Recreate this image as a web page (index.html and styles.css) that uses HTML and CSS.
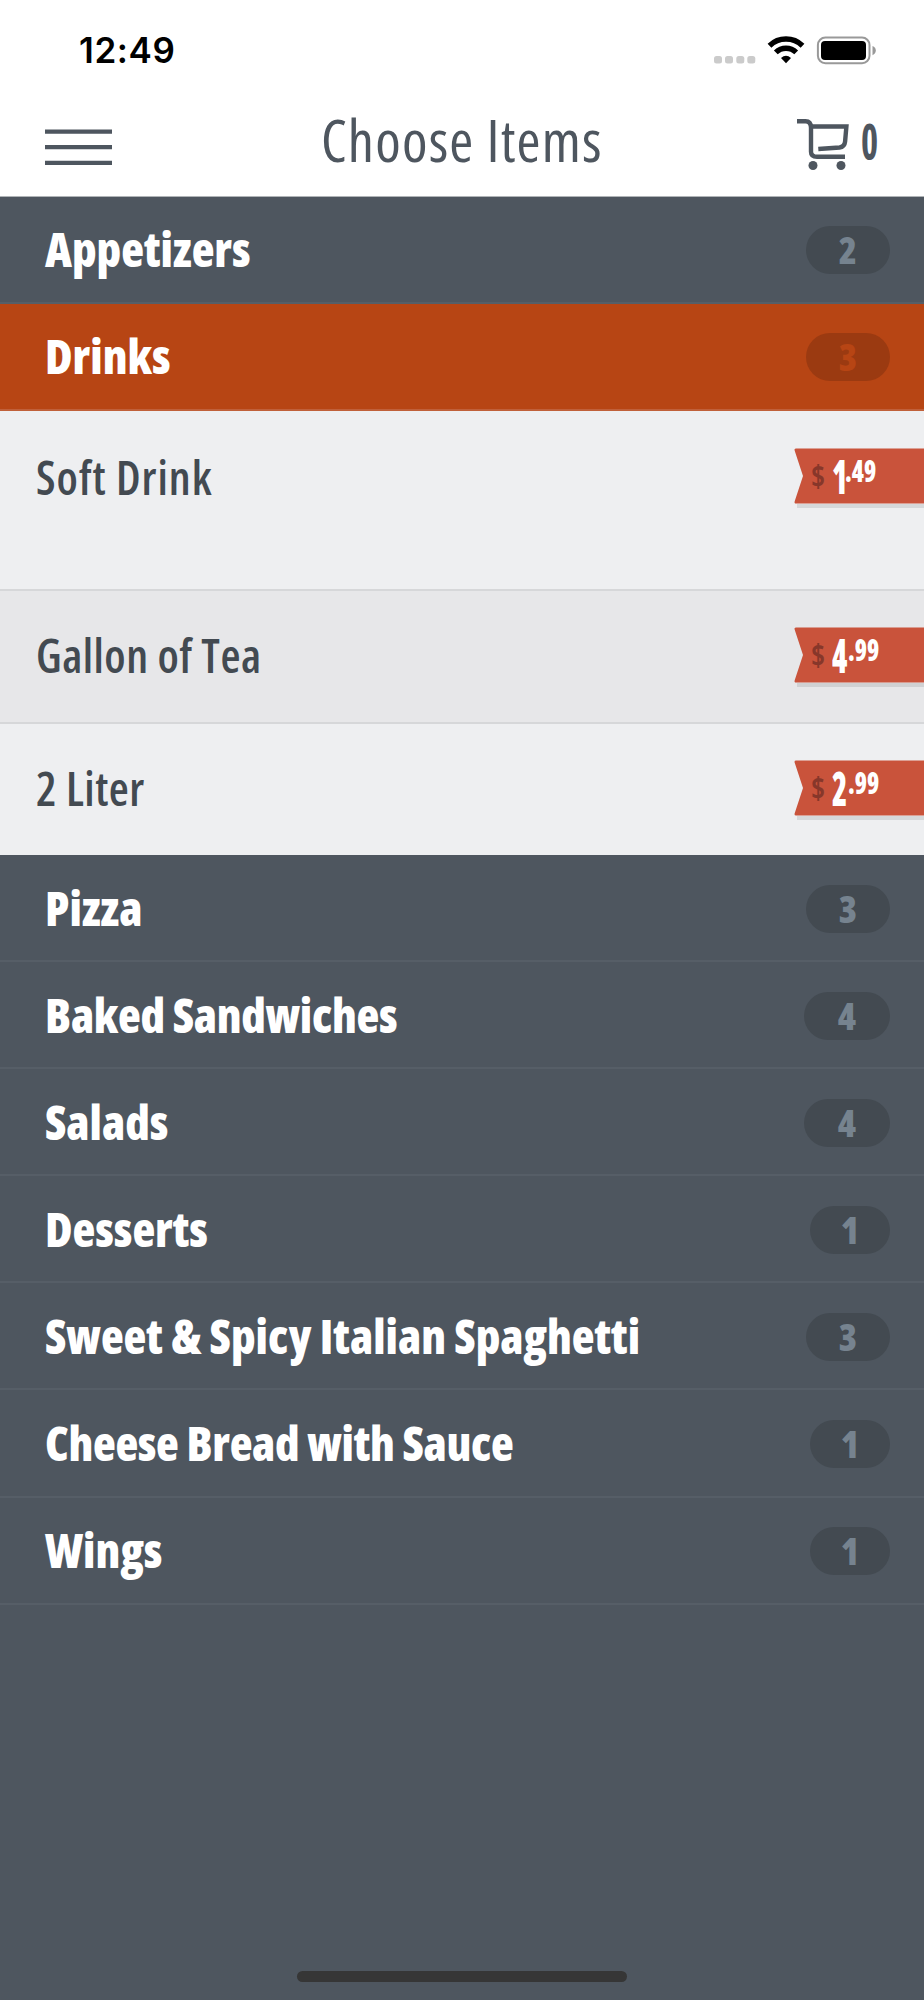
FILE: index.html
```
<!DOCTYPE html>
<html lang="en">
    <head>
        <title>Choose Items</title>
        <meta charset="UTF-8">
        <link rel="stylesheet" href="styles.css">
    </head>
    <body>
        <header>
            <div class="status">
                <span class="time">12:49</span>
                <svg class="signals" width="164" height="30" viewBox="0 0 164 30">
                    <g fill="#cbcbcb">
                        <rect x="0" y="21" width="8" height="7.5" rx="2.5"/>
                        <rect x="11" y="21" width="8" height="7.5" rx="2.5"/>
                        <rect x="22.3" y="21" width="8" height="7.5" rx="2.5"/>
                        <rect x="33.3" y="21" width="8" height="7.5" rx="2.5"/>
                    </g>
                    <g fill="none" stroke="#000" stroke-width="5.4">
                        <path d="M55.5 10.8a23.6 23.6 0 0 1 33 0"/>
                        <path d="M61.8 17.4a14.6 14.6 0 0 1 20.4 0"/>
                    </g>
                    <path d="M72 28.3l-5-5.2q5-4.6 10 0z"/>
                    <rect x="103.9" y="2.6" width="51.6" height="25.6" rx="7.5" fill="none" stroke="#999" stroke-width="2"/>
                    <rect x="107" y="5.9" width="45" height="19" rx="4"/>
                    <path d="M158.5 11q3.3 1.2 3.3 4.6t-3.3 4.6z" fill="#999"/>
                </svg>
            </div>
            <nav class="toolbar">
                <svg class="menu" width="67" height="36" viewBox="0 0 67 36">
                    <path d="M0 2.7h67M0 18.2h67M0 33.8h67" stroke="#4e565f" stroke-width="4.3"/>
                </svg>
                <h1>Choose Items</h1>
                <div class="cart">
                    <svg width="54" height="52" viewBox="0 0 54 52">
                        <g fill="none" stroke="#4e565f" stroke-width="4.4">
                            <path d="M0 2.3h8.5q5.5 0 5.5 6.5v24q0 5 6 5h28"/>
                            <path d="M14 7.5h35.4l-1.3 15q-.5 5.3-5.6 6L21.3 30"/>
                        </g>
                        <circle cx="16" cy="46.5" r="4.5" fill="#4e565f"/>
                        <circle cx="44" cy="46.5" r="4.5" fill="#4e565f"/>
                    </svg>
                    <span>0</span>
                </div>
            </nav>
        </header>
        <ul class="categories">
            <li class="category first"><span class="name">Appetizers</span><span class="count">2</span></li>
            <li class="category active"><span class="name">Drinks</span><span class="count">3</span></li>
            <li>
                <ul class="items">
                    <li class="item tall">
                        <span class="label">Soft Drink</span>
                        <div class="price">
                            <svg width="130" height="61" viewBox="0 0 130 61">
                                <path d="M3 56h127v4H3z" fill="#d6d8da"/>
                                <path d="M2 .5h128v55H2q-2 0-1.3-2.3L9 28 .7 2.8Q0 .5 2 .5z" fill="#c9533b"/>
                            </svg>
                            <span class="currency">$</span><span class="whole one">1</span><span class="cents">.49</span>
                        </div>
                    </li>
                    <li class="item even">
                        <span class="label">Gallon of Tea</span>
                        <div class="price">
                            <svg width="130" height="61" viewBox="0 0 130 61">
                                <path d="M3 56h127v4H3z" fill="#d0d1d3"/>
                                <path d="M2 .5h128v55H2q-2 0-1.3-2.3L9 28 .7 2.8Q0 .5 2 .5z" fill="#c9533b"/>
                            </svg>
                            <span class="currency">$</span><span class="whole">4</span><span class="cents">.99</span>
                        </div>
                    </li>
                    <li class="item last">
                        <span class="label">2 Liter</span>
                        <div class="price">
                            <svg width="130" height="61" viewBox="0 0 130 61">
                                <path d="M3 56h127v4H3z" fill="#d6d8da"/>
                                <path d="M2 .5h128v55H2q-2 0-1.3-2.3L9 28 .7 2.8Q0 .5 2 .5z" fill="#c9533b"/>
                            </svg>
                            <span class="currency">$</span><span class="whole">2</span><span class="cents">.99</span>
                        </div>
                    </li>
                </ul>
            </li>
            <li class="category"><span class="name">Pizza</span><span class="count">3</span></li>
            <li class="category"><span class="name long">Baked Sandwiches</span><span class="count four">4</span></li>
            <li class="category"><span class="name">Salads</span><span class="count four">4</span></li>
            <li class="category"><span class="name">Desserts</span><span class="count one">1</span></li>
            <li class="category"><span class="name">Sweet &amp; Spicy Italian Spaghetti</span><span class="count">3</span></li>
            <li class="category"><span class="name long">Cheese Bread with Sauce</span><span class="count one">1</span></li>
            <li class="category"><span class="name">Wings</span><span class="count one">1</span></li>
        </ul>
        <div class="home-bar"></div>
    </body>
</html>
```
FILE: styles.css
```
* {
    box-sizing: border-box;
}
body {
    margin: 0;
    height: 2000px;
    display: flex;
    flex-direction: column;
    background-color: #4e565f;
    font-family: "Open Sans", "Noto Sans", sans-serif;
    font-stretch: 75%;
    overflow: hidden;
}
ul {
    margin: 0;
    padding: 0;
    list-style: none;
}
header {
    height: 197px;
    background-color: white;
    border-bottom: 1px solid #b0b4b7;
}
.status {
    height: 100px;
    padding: 0 46px 0 79px;
    display: flex;
    justify-content: space-between;
    align-items: center;
}
.time {
    font: 600 35px Inter, sans-serif;
    letter-spacing: .6px;
}
.toolbar {
    height: 96px;
    padding: 0 46px 0 45px;
    display: flex;
}
.menu {
    margin-top: 29px;
}
h1 {
    margin: 0 auto 0 209px;
    font-size: 58px;
    font-weight: 400;
    line-height: 79px;
    letter-spacing: 1.2px;
    color: #4e565f;
}
.cart {
    display: flex;
    margin-top: 19px;
    color: #4e565f;
}
.cart span {
    width: 17px;
    margin-left: 10px;
    font-size: 50px;
    font-weight: 700;
    line-height: 44px;
    transform: scaleX(.73);
    transform-origin: left;
}
.category {
    height: 107.1px;
    padding: 0 34px 0 45px;
    display: flex;
    justify-content: space-between;
    align-items: center;
    border-bottom: 2px solid #565e67;
}
.category.first {
    height: 106.5px;
}
.category.active {
    height: 107.5px;
    background-color: #b74514;
    border-bottom-color: #c0603a;
}
.name {
    color: white;
    font-size: 47px;
    font-weight: 800;
    white-space: nowrap;
}
.name.long {
    letter-spacing: -.3px;
}
.count {
    width: 84px;
    height: 48px;
    margin-top: 2px;
    border-radius: 24px;
    background-color: #434a51;
    color: #76838f;
    font-size: 37px;
    font-weight: 800;
    line-height: 48px;
    text-align: center;
}
.count.four {
    width: 86px;
}
.count.one {
    width: 80px;
}
.active .count {
    background-color: #9b3a11;
    color: #b74514;
}
.item {
    height: 133px;
    padding-left: 36px;
    display: flex;
    justify-content: space-between;
    background-color: #eeeff1;
    border-bottom: 2px solid #d6d7d9;
}
.item.tall {
    height: 180px;
}
.item.even {
    background-color: #e7e7e9;
}
.item.last {
    height: 131px;
    border-bottom: none;
}
.label {
    color: #434a51;
    font-size: 46px;
    font-weight: 600;
    line-height: 129px;
    letter-spacing: .5px;
}
.tall .label {
    line-height: 132px;
    letter-spacing: 1px;
}
.price {
    width: 130px;
    height: 61px;
    margin-top: 36px;
    display: flex;
    position: relative;
    color: white;
    font-weight: 800;
    line-height: 56px;
}
.tall .price {
    margin-top: 37px;
}
.price svg {
    position: absolute;
}
.price span {
    z-index: 1;
    transform-origin: left;
}
.currency {
    margin-left: 17px;
    width: 21px;
    color: #87372a;
    font-size: 30px;
    font-weight: 700;
}
.whole {
    width: 16px;
    font-size: 47px;
    transform: scaleX(.66);
}
.whole.one {
    width: 13px;
}
.cents {
    font-size: 30px;
    line-height: 45px;
    transform: scaleX(.82);
}
.home-bar {
    width: 330px;
    height: 11px;
    margin: auto auto 18px;
    border-radius: 6px;
    background-color: #363636;
}
```
